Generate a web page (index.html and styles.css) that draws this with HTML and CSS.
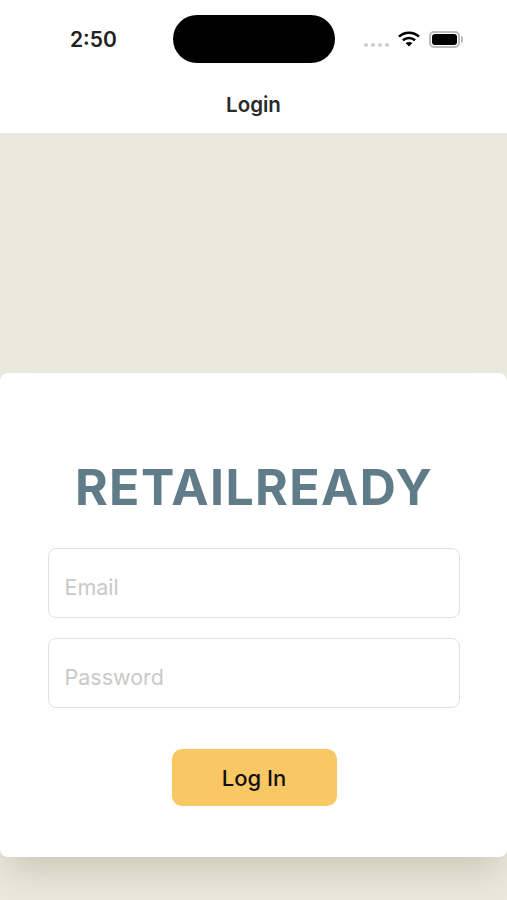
FILE: index.html
```html
<!DOCTYPE html>
<html lang="en">
<head>
  <meta charset="UTF-8" />
  <meta name="viewport" content="width=device-width, initial-scale=1.0"/>
  <title>Login - RetailReady</title>
  <link rel="stylesheet" href="styles.css">
</head>
<body>
  <header class="top-bar">
    <div class="status-bar">
      <span class="status-time">2:50</span>
      <div class="status-island"></div>
      <div class="status-icons">
        <div class="signal-dots"><i></i><i></i><i></i><i></i></div>
        <svg class="wifi-icon" width="22" height="16" viewBox="0 0 22 16">
          <path d="M1 5.6 C6.6 0.4 15.4 0.4 21 5.6" fill="none" stroke="#000" stroke-width="2.6"/>
          <path d="M4.9 9.3 C8.4 6.2 13.6 6.2 17.1 9.3" fill="none" stroke="#000" stroke-width="2.6"/>
          <path d="M11 15.6 L7.6 12.1 C9.6 10.5 12.4 10.5 14.4 12.1 Z" fill="#000"/>
        </svg>
        <div class="battery"><div class="battery-fill"></div></div>
      </div>
    </div>
    <div class="nav-title">Login</div>
  </header>

  <main class="login-page">
    <form class="login-card">
      <h1 class="brand">RETAILREADY</h1>
      <div class="field"><span>Email</span></div>
      <div class="field"><span>Password</span></div>
      <button type="button" class="login-btn">Log In</button>
    </form>
  </main>
</body>
</html>
```

FILE: styles.css
```css
* {
  box-sizing: border-box;
}

body {
  margin: 0;
  width: 507px;
  height: 900px;
  overflow: hidden;
  font-family: Inter, "Liberation Sans", sans-serif;
  background: #e8e8dc;
  display: flex;
  flex-direction: column;
}

.top-bar {
  background: white;
  height: 133px;
}

.status-bar {
  display: grid;
  grid-template-columns: 173px 162px 1fr;
  align-items: center;
  padding-top: 15px;
}

.status-time {
  padding-left: 70px;
  font-size: 21px;
  font-weight: 600;
  color: #222;
}

.status-island {
  height: 48px;
  background: black;
  border-radius: 24px;
}

.status-icons {
  display: flex;
  align-items: center;
  padding-left: 29px;
}

.signal-dots {
  display: flex;
  gap: 3px;
  margin-top: 11px;
  margin-right: 9px;
}

.signal-dots i {
  width: 4px;
  height: 4px;
  border-radius: 50%;
  background: #cfcfcf;
}

.wifi-icon {
  margin-right: 9px;
  margin-top: -1px;
}

.battery {
  position: relative;
  width: 31px;
  height: 17px;
  padding: 1px;
  border: 2px solid #bcbcbc;
  border-radius: 5px;
}

.battery::after {
  content: "";
  position: absolute;
  right: -5px;
  top: 3px;
  width: 2px;
  height: 7px;
  background: #bcbcbc;
  border-radius: 0 2px 2px 0;
}

.battery-fill {
  height: 100%;
  background: black;
  border-radius: 3px;
}

.nav-title {
  margin-top: 29px;
  text-align: center;
  font-size: 20.5px;
  line-height: 26px;
  font-weight: 600;
  color: #2a2a2a;
}

.login-page {
  flex: 1;
  padding-top: 240px;
}

.login-card {
  height: 484px;
  background: white;
  border-radius: 8px;
  box-shadow: 0 22px 30px -8px rgba(90, 90, 60, 0.2);
  padding: 83px 47px 0 48px;
  display: flex;
  flex-direction: column;
}

.brand {
  margin: 0 0 29px 0;
  text-align: center;
  font-size: 50px;
  line-height: 63px;
  font-weight: 700;
  letter-spacing: 1.4px;
  white-space: nowrap;
  color: #617c89;
}

.field {
  height: 70px;
  margin-bottom: 20px;
  padding: 8px 0 0 15.5px;
  display: flex;
  align-items: center;
  border: 1.5px solid #e0e0e0;
  border-radius: 8px;
  font-size: 21.5px;
  color: #c9c9c9;
}

.login-btn {
  align-self: center;
  width: 165px;
  height: 57px;
  margin-top: 21px;
  background: #f9c763;
  border: none;
  border-radius: 10px;
  font-family: inherit;
  font-size: 22px;
  font-weight: 500;
  color: #111;
}
```
